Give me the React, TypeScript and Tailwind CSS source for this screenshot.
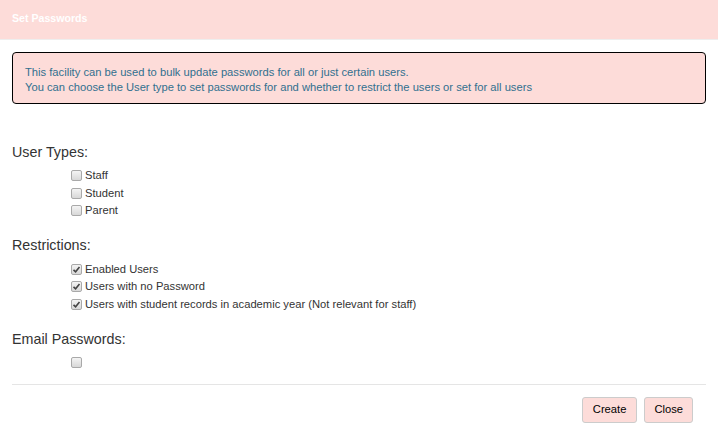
import { ReactNode } from 'react'

function Check({ checked, label }: { checked?: boolean; label?: string }) {
  return (
    <div className="flex items-center h-[17.5px] pl-[71px]">
      <span className="w-[11px] h-[11px] rounded-[2px] border border-[#a9a9a9] bg-gradient-to-b from-[#f4f4f4] to-[#d8d8d8] flex items-center justify-center">
        {checked && (
          <svg width="9" height="9" viewBox="0 0 9 9">
            <path d="M1.5 4.8 L3.6 6.8 L7.5 2" fill="none" stroke="#444" strokeWidth="1.6" />
          </svg>
        )}
      </span>
      {label && <span className="ml-[3px] text-[11.2px] text-[#333]">{label}</span>}
    </div>
  )
}

function Section({ title, className, children }: { title: string; className: string; children: ReactNode }) {
  return (
    <div className={className}>
      <h3 className="px-3 text-[14.3px] leading-[18px] text-[#333]">{title}</h3>
      {children}
    </div>
  )
}

export default function App() {
  return (
    <div className="w-[718px] h-[448px] bg-white font-['Liberation_Sans',Arial,sans-serif]">
      <div className="h-10 bg-[#fddcd9] border-b border-[#eee] px-3 flex items-center">
        <span className="text-white font-bold text-[10.6px] mt-[-2px]">Set Passwords</span>
      </div>

      <div className="mx-3 mt-3 border border-black rounded-[4px] bg-[#fddcd9] px-3 pt-[12px] pb-[8px] text-[11.2px] leading-[15px] text-[#31708f]">
        <p>This facility can be used to bulk update passwords for all or just certain users.</p>
        <p>You can choose the User type to set passwords for and whether to restrict the users or set for all users</p>
      </div>

      <Section title="User Types:" className="mt-[39px]">
        <div className="mt-[6px]">
          <Check label="Staff" />
          <Check label="Student" />
          <Check label="Parent" />
        </div>
      </Section>

      <Section title="Restrictions:" className="mt-[16px]">
        <div className="mt-[7px]">
          <Check checked label="Enabled Users" />
          <Check checked label="Users with no Password" />
          <Check checked label="Users with student records in academic year (Not relevant for staff)" />
        </div>
      </Section>

      <Section title="Email Passwords:" className="mt-[17px]">
        <div className="mt-[6px]">
          <Check />
        </div>
      </Section>

      <div className="mx-3 mt-[12px] border-t border-[#e5e5e5]" />

      <div className="flex justify-end gap-[7px] pr-[25px] mt-3">
        <button className="h-[26px] px-[10px] text-[11.2px] text-black bg-[#fddcd9] border border-[#ccc] rounded-[3px]">Create</button>
        <button className="h-[26px] px-[9px] text-[11.2px] text-black bg-[#fddcd9] border border-[#ccc] rounded-[3px]">Close</button>
      </div>
    </div>
  )
}
